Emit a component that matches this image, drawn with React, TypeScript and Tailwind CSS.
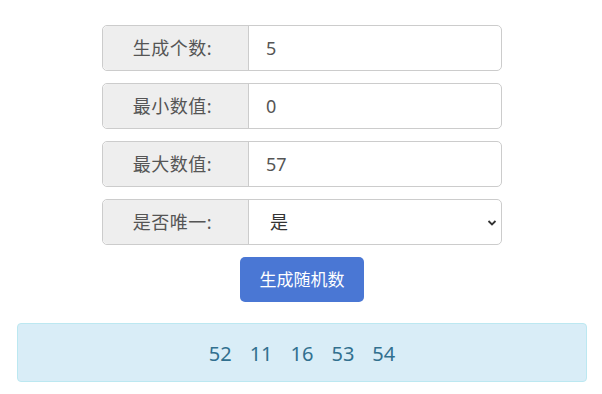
import { useState } from "react";

const font = { fontFamily: '"Noto Sans", "Noto Sans CJK SC", sans-serif' };

function Row({ label, children }: { label: string; children: React.ReactNode }) {
  return (
    <div className="flex h-[46px] w-[400px] rounded-[5px] border border-[#ccc] bg-white">
      <div className="flex w-[146px] shrink-0 items-center justify-center rounded-l-[5px] border-r border-[#ccc] bg-[#eee] pr-[6px] text-[18px] tracking-[0.5px] text-[#555]">
        {label}
      </div>
      <div className="relative flex flex-1 items-center">{children}</div>
    </div>
  );
}

export default function App() {
  const [count, setCount] = useState("5");
  const [min, setMin] = useState("0");
  const [max, setMax] = useState("57");
  const [unique, setUnique] = useState("是");
  const nums = [52, 11, 16, 53, 54];

  return (
    <div className="flex flex-col items-center pl-[2px] pt-[25px]" style={font}>
      <div className="flex flex-col gap-[12px]">
        <Row label="生成个数:">
          <input
            value={count}
            onChange={(e) => setCount(e.target.value)}
            className="h-full w-full rounded-r-[5px] pl-[17px] text-[18px] text-[#555] outline-none"
          />
        </Row>
        <Row label="最小数值:">
          <input
            value={min}
            onChange={(e) => setMin(e.target.value)}
            className="h-full w-full rounded-r-[5px] pl-[17px] text-[18px] text-[#555] outline-none"
          />
        </Row>
        <Row label="最大数值:">
          <input
            value={max}
            onChange={(e) => setMax(e.target.value)}
            className="h-full w-full rounded-r-[5px] pl-[17px] text-[18px] text-[#555] outline-none"
          />
        </Row>
        <Row label="是否唯一:">
          <select
            value={unique}
            onChange={(e) => setUnique(e.target.value)}
            className="h-full w-full appearance-none rounded-r-[5px] bg-transparent pl-[21px] text-[18px] text-[#333] outline-none"
          >
            <option>是</option>
            <option>否</option>
          </select>
          <svg
            className="pointer-events-none absolute right-[4px] top-[19px]"
            width="10"
            height="8"
            viewBox="0 0 10 8"
          >
            <path d="M1.5 2 L5 5.5 L8.5 2" fill="none" stroke="#333" strokeWidth="1.8" />
          </svg>
        </Row>
      </div>

      <button className="mt-[12px] h-[45px] w-[124px] rounded-[5px] bg-[#4a77d4] text-[17px] text-white">
        生成随机数
      </button>

      <div className="mt-[21px] flex h-[59px] w-[570px] items-center justify-center gap-[18px] rounded-[4px] border border-[#bce8f1] bg-[#d9edf7] pt-[2px] text-[20px] text-[#31708f]">
        {nums.map((n, i) => (
          <span key={i}>{n}</span>
        ))}
      </div>
    </div>
  );
}
